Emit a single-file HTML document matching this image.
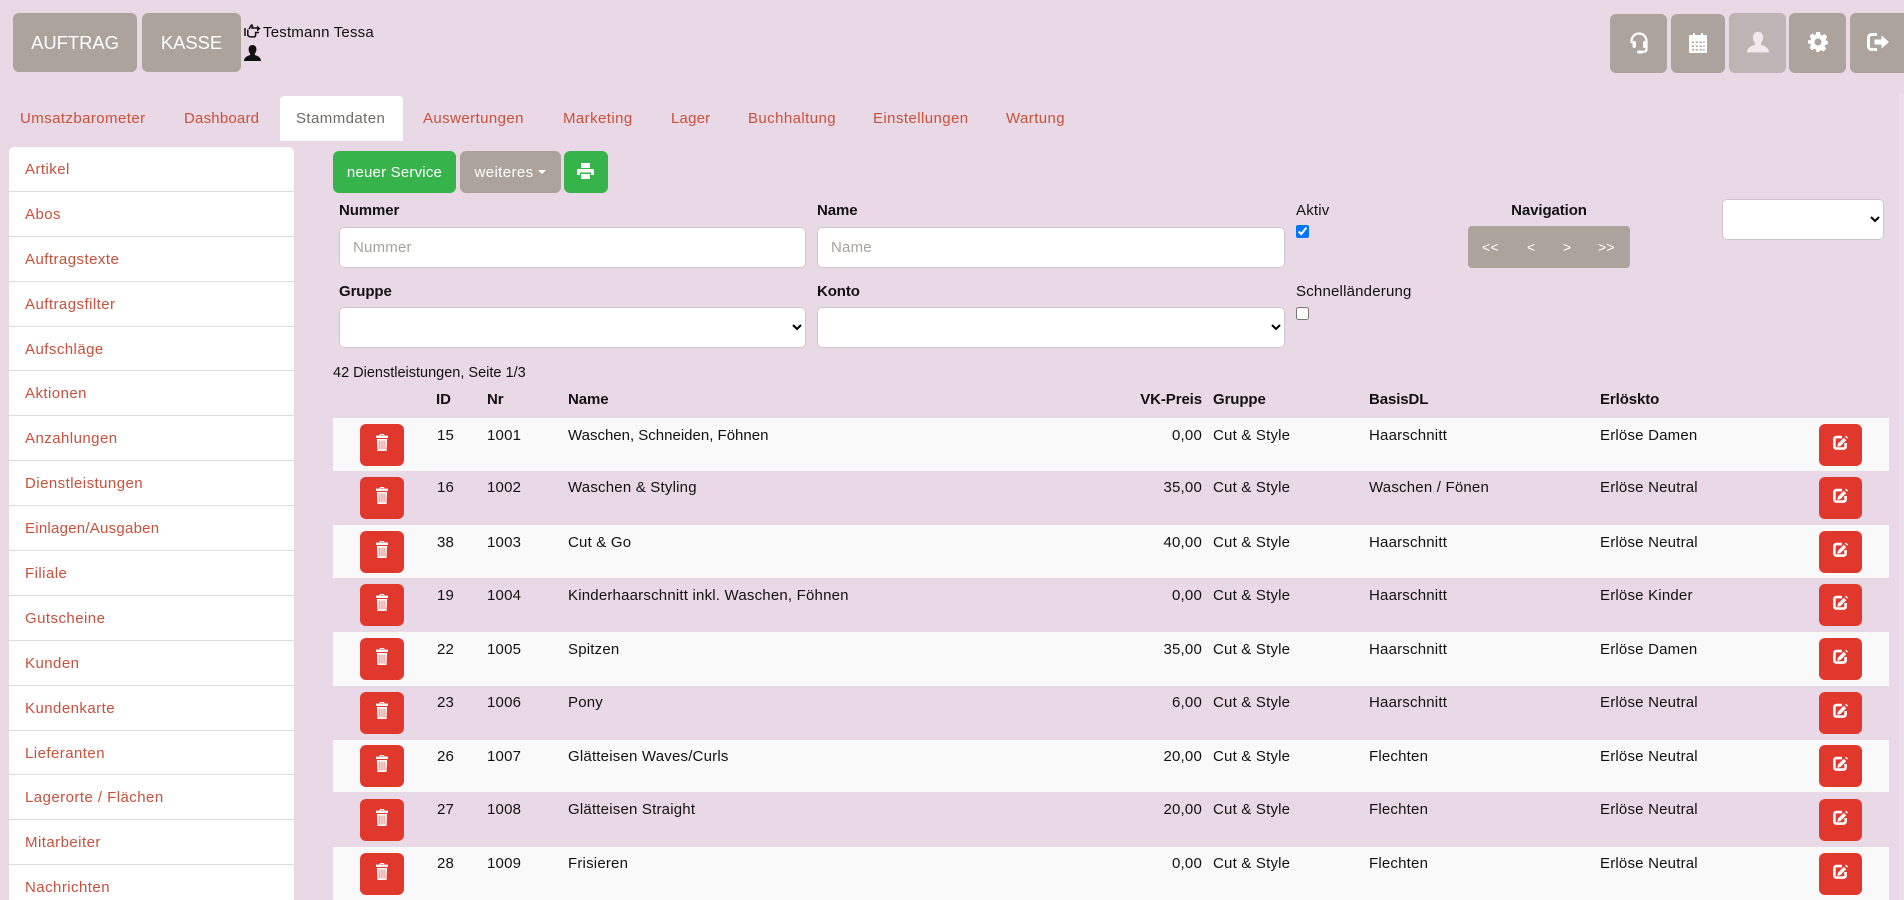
<!DOCTYPE html>
<html lang="de">
<head>
<meta charset="utf-8">
<title>Stammdaten</title>
<style>
*{box-sizing:border-box}
html,body{margin:0;padding:0;width:1904px;height:900px;overflow:hidden;background:#e9d9e6}
body{position:relative;font-family:"Liberation Sans",sans-serif;font-size:15px;color:#111;letter-spacing:.2px}
.a{position:absolute;white-space:nowrap}
.t{position:absolute;white-space:nowrap;line-height:20px;height:20px}
.b{font-weight:bold;letter-spacing:-.1px}
.btn{position:absolute;display:flex;align-items:center;justify-content:center;border-radius:6px;color:#fff;background:#aba39c;white-space:nowrap}
.g{background:#36b44b}
.tab{position:absolute;top:109px;line-height:20px;color:#c9503b;white-space:nowrap;letter-spacing:.42px}
#side{position:absolute;left:9px;top:147px;width:285px;height:760px;background:#fff;border-radius:5px 5px 0 0}
#side div{height:44.9px;line-height:46px;padding-left:16px;color:#c9503b;border-bottom:1px solid #ddd;letter-spacing:.45px}
.inp{position:absolute;background:#fff;border:1px solid #cfc6cd;border-radius:5px;height:41px;font:15px "Liberation Sans",sans-serif;padding:0}
.r{position:absolute;left:333px;width:1556px;height:54px}
.s{background:#f9f9f9}
.r .t{top:8px}
.r.n .t{top:7px}
.del,.edt{position:absolute;top:6px;height:41.5px;background:#e0382c;border-radius:6px;display:flex;align-items:center;justify-content:center}
.del{left:27px;width:44px}
.edt{left:1486px;width:43px}
.del svg,.edt svg{margin-top:-4px}
.c1{left:104px}.c2{left:154px}.c3{left:235px}.c4{right:687px}.c5{left:880px}.c6{left:1036px}.c7{left:1267px}
input[type=checkbox]{position:absolute;margin:0;width:13px;height:13px}
</style>
</head>
<body>
<svg width="0" height="0" style="position:absolute">
<defs>
<symbol id="tr" viewBox="0 0 12 17">
<path fill="#fff" d="M4 0h4l.6 1.6H12V4H0V1.6h3.4zM4.8 1 4.5 1.6h3L7.2 1zM.9 5h10.2l-.6 12h-9z"/>
<path stroke="#e0382c" stroke-opacity=".75" stroke-width=".8" d="M3.2 6.5v9M5.1 6.5v9M7 6.500v9M8.900 6.500v9"/>
</symbol>
<symbol id="ed" viewBox="0 0 16 15">
<path fill="none" stroke="#fff" stroke-width="2.6" d="M9 2.100H3.400a2 2 0 0 0-2 2v7.500a2 2 0 0 0 2 2h7.200a2 2 0 0 0 2-2V8"/>
<path fill="#fff" d="M10.800 2.800l2.400 2.400-5.700 5.800-3.300.9.800-3.300zM13 .600l2 2-1 1-2-2z"/>
</symbol>
</defs>
</svg>
<div class="a" style="left:1899px;top:93px;width:5px;height:807px;background:#ecdeea"></div>

<div class="btn" style="left:13px;top:13px;width:124px;height:59px;font-size:18.4px;letter-spacing:0">AUFTRAG</div>
<div class="btn" style="left:142px;top:13px;width:99px;height:59px;font-size:18.4px;letter-spacing:0">KASSE</div>

<svg class="a" style="left:244px;top:24px" width="17" height="14" viewBox="0 0 17 14"><path fill="none" stroke="#111" stroke-width="1.5" d="M1 4v8M3.800 5.500v5.800c1 1.200 2 1.600 3 1.600h3c1.200 0 1.800-.7 1.800-1.800V8.500h3.400M5 5l2.500-4c.7 0 1.200.6 1 1.400L8 4h6.500"/><path fill="#111" d="M13 1.500l3.500 3-3.500 3z"/></svg>
<div class="t" style="left:263px;top:23px;color:#111;font-size:15px">Testmann Tessa</div>
<svg class="a" style="left:244px;top:45px" width="17" height="16" viewBox="0 0 16 15"><path fill="#111" d="M8 0c2.400 0 3.700 1.700 3.700 4 0 1.700-.6 3.200-1.500 4.100v1.200c1.600.9 5.800 1.700 5.800 5.700H0c0-4 4.200-4.800 5.800-5.700V8.100C4.900 7.200 4.300 5.700 4.300 4 4.300 1.700 5.600 0 8 0z"/></svg>

<div class="btn" style="left:1610px;top:14px;width:57px;height:59px"><svg width="20" height="22" viewBox="0 0 20 22" style="margin-top:-2px"><path fill="none" stroke="#fff" stroke-width="2.200" d="M2.500 11V9a7.500 7.500 0 0 1 15 0v8c0 1.800-1 2.800-3 2.800H10"/><rect x="3.500" y="9" width="3.500" height="7" rx="1.700" fill="#fff"/><rect x="14" y="9" width="4.500" height="7" rx="1.700" fill="#fff"/><rect x="8" y="18.500" width="6" height="3" rx="1.500" fill="#fff"/></svg></div>
<div class="btn" style="left:1671px;top:14px;width:54px;height:59px"><svg width="18" height="20" viewBox="0 0 18 20" style="margin-top:-2px"><path fill="#fff" fill-rule="evenodd" d="M4 0h2v2h6V0h2v2h3a1 1 0 0 1 1 1v16a1 1 0 0 1-1 1H1a1 1 0 0 1-1-1V3a1 1 0 0 1 1-1h3zM2.800 8.500v1.500h2.200V8.500zm3.900 0v1.500h2.200V8.500zm3.900 0v1.500h2.200V8.500zm3.600 0v1.500h1.500V8.500zM2.800 12.500v1.500h2.200v-1.500zm3.900 0v1.500h2.200v-1.500zm3.900 0v1.500h2.200v-1.500zm3.600 0v1.500h1.500v-1.500zM2.800 16v1.500h2.200V16zm3.900 0v1.500h2.200V16zm3.900 0v1.500h2.200V16zm3.600 0v1.500h1.500V16z"/></svg></div>
<div class="btn" style="left:1729px;top:13px;width:57px;height:60px;background:#bfb4b4"><svg width="22" height="22" viewBox="0 0 16 15" style="margin-top:-2px"><path fill="#f4e8ee" d="M8 0c2.400 0 3.700 1.700 3.700 4 0 1.700-.6 3.200-1.500 4.100v1.200c1.600.9 5.800 1.700 5.800 5.700H0c0-4 4.200-4.800 5.800-5.700V8.100C4.900 7.200 4.300 5.700 4.300 4 4.300 1.700 5.600 0 8 0z"/></svg></div>
<div class="btn" style="left:1789px;top:13px;width:57px;height:60px"><svg width="20" height="20" viewBox="0 0 20 20" style="margin-top:-3px"><path fill="#fff" fill-rule="evenodd" d="M8 0h4l.5 2.800 1.600.7L16.500 2l2.800 2.800-1.600 2.400.7 1.600L20 9v3l-2.600.8-.7 1.600 1.500 2.400-2.800 2.800-2.400-1.500-1.400.6L11 20H8.500L8 17.500l-1.600-.7L4 18.300 1.500 15.600 3 13.200l-.7-1.500L0 11.500V8.500l2.400-.5.7-1.500L1.600 4 4.400 1.500l2.400 1.500 1-.4zM10 6.500a3.500 3.500 0 1 0 0 7 3.500 3.500 0 0 0 0-7z"/></svg></div>
<div class="btn" style="left:1850px;top:13px;width:60px;height:60px;justify-content:flex-start;padding-left:17px"><svg width="23" height="18" viewBox="0 0 23 18" style="margin-top:-2px"><path fill="none" stroke="#fff" stroke-width="3" d="M10 1.500H4.500a3 3 0 0 0-3 3v9a3 3 0 0 0 3 3H10"/><path fill="#fff" d="M7.500 6.500h7V2.500l7.500 6.500-7.500 6.500v-4h-7z"/></svg></div>

<div class="tab" style="left:20px">Umsatzbarometer</div>
<div class="tab" style="left:184px;letter-spacing:.2px">Dashboard</div>
<div class="a" style="left:280px;top:96px;width:123px;height:45px;background:#fff;border-radius:4px 4px 0 0"></div>
<div class="tab" style="left:296px;color:#6f6a68">Stammdaten</div>
<div class="tab" style="left:423px">Auswertungen</div>
<div class="tab" style="left:563px">Marketing</div>
<div class="tab" style="left:671px;letter-spacing:.2px">Lager</div>
<div class="tab" style="left:748px">Buchhaltung</div>
<div class="tab" style="left:873px">Einstellungen</div>
<div class="tab" style="left:1006px">Wartung</div>

<div id="side">
<div>Artikel</div>
<div>Abos</div>
<div>Auftragstexte</div>
<div>Auftragsfilter</div>
<div>Aufschläge</div>
<div>Aktionen</div>
<div>Anzahlungen</div>
<div>Dienstleistungen</div>
<div style="letter-spacing:.25px">Einlagen/Ausgaben</div>
<div>Filiale</div>
<div>Gutscheine</div>
<div>Kunden</div>
<div>Kundenkarte</div>
<div>Lieferanten</div>
<div>Lagerorte / Flächen</div>
<div>Mitarbeiter</div>
<div>Nachrichten</div>
</div>

<div class="btn g" style="left:333px;top:151px;width:123px;height:42px">neuer Service</div>
<div class="btn" style="left:460px;top:151px;width:101px;height:42px;letter-spacing:.4px;padding-right:1px">weiteres<span style="display:inline-block;margin-left:4px;border:4px solid transparent;border-top-color:#fff;border-bottom:0"></span></div>
<div class="btn g" style="left:564px;top:151px;width:44px;height:42px"><svg width="17" height="16" viewBox="0 0 17 16" style="margin:-2px 0 0 -2px"><path fill="#fff" fill-rule="evenodd" d="M4 0h9v5H4zM1.500 6h14A1.500 1.500 0 0 1 17 7.500V12h-3V9.500H3V12H0V7.500A1.500 1.500 0 0 1 1.500 6zM4 11h9v5H4z"/></svg></div>

<div class="t b" style="left:339px;top:201px">Nummer</div>
<div class="inp" style="left:339px;top:227px;width:467px"></div>
<div class="t" style="left:353px;top:238px;color:#a8a29e">Nummer</div>
<div class="t b" style="left:817px;top:201px">Name</div>
<div class="inp" style="left:817px;top:227px;width:468px"></div>
<div class="t" style="left:831px;top:238px;color:#a8a29e">Name</div>
<div class="t" style="left:1296px;top:201px">Aktiv</div>
<input type="checkbox" checked style="left:1296px;top:225px">
<div class="t b" style="left:1468px;top:201px;width:162px;text-align:center">Navigation</div>
<div class="a" style="left:1468px;top:226px;width:162px;height:42px;background:#aba39c;border-radius:4px"></div>
<div class="t" style="left:1482px;top:237px;color:#fff;font-size:14px">&lt;&lt;</div>
<div class="t" style="left:1527px;top:237px;color:#fff;font-size:14px">&lt;</div>
<div class="t" style="left:1563px;top:237px;color:#fff;font-size:14px">&gt;</div>
<div class="t" style="left:1598px;top:237px;color:#fff;font-size:14px">&gt;&gt;</div>
<select class="inp" style="left:1722px;top:199px;width:162px"><option></option></select>

<div class="t b" style="left:339px;top:282px">Gruppe</div>
<select class="inp" style="left:339px;top:307px;width:467px"><option></option></select>
<div class="t b" style="left:817px;top:282px">Konto</div>
<select class="inp" style="left:817px;top:307px;width:468px"><option></option></select>
<div class="t" style="left:1296px;top:282px">Schnelländerung</div>
<input type="checkbox" style="left:1296px;top:307px">

<div class="t" style="left:333px;top:363px;font-size:14.5px;letter-spacing:0">42 Dienstleistungen, Seite 1/3</div>

<div class="t b" style="left:436px;top:390px">ID</div>
<div class="t b" style="left:487px;top:390px">Nr</div>
<div class="t b" style="left:568px;top:390px">Name</div>
<div class="t b" style="right:702px;top:390px">VK-Preis</div>
<div class="t b" style="left:1213px;top:390px">Gruppe</div>
<div class="t b" style="left:1369px;top:390px">BasisDL</div>
<div class="t b" style="left:1600px;top:390px">Erlöskto</div>

<div class="r s" style="top:418px;height:53px"><div class="del"><svg width="12" height="17"><use href="#tr"/></svg></div><div class="t c1">15</div><div class="t c2">1001</div><div class="t c3" style="letter-spacing:0">Waschen, Schneiden, Föhnen</div><div class="t c4">0,00</div><div class="t c5">Cut &amp; Style</div><div class="t c6">Haarschnitt</div><div class="t c7">Erlöse Damen</div><div class="edt"><svg width="16" height="15"><use href="#ed"/></svg></div></div>
<div class="r n" style="top:471px"><div class="del"><svg width="12" height="17"><use href="#tr"/></svg></div><div class="t c1">16</div><div class="t c2">1002</div><div class="t c3">Waschen &amp; Styling</div><div class="t c4">35,00</div><div class="t c5">Cut &amp; Style</div><div class="t c6">Waschen / Fönen</div><div class="t c7">Erlöse Neutral</div><div class="edt"><svg width="16" height="15"><use href="#ed"/></svg></div></div>
<div class="r s" style="top:525px;height:53px"><div class="del"><svg width="12" height="17"><use href="#tr"/></svg></div><div class="t c1">38</div><div class="t c2">1003</div><div class="t c3">Cut &amp; Go</div><div class="t c4">40,00</div><div class="t c5">Cut &amp; Style</div><div class="t c6">Haarschnitt</div><div class="t c7">Erlöse Neutral</div><div class="edt"><svg width="16" height="15"><use href="#ed"/></svg></div></div>
<div class="r" style="top:578px"><div class="del"><svg width="12" height="17"><use href="#tr"/></svg></div><div class="t c1">19</div><div class="t c2">1004</div><div class="t c3">Kinderhaarschnitt inkl. Waschen, Föhnen</div><div class="t c4">0,00</div><div class="t c5">Cut &amp; Style</div><div class="t c6">Haarschnitt</div><div class="t c7">Erlöse Kinder</div><div class="edt"><svg width="16" height="15"><use href="#ed"/></svg></div></div>
<div class="r s" style="top:632px"><div class="del"><svg width="12" height="17"><use href="#tr"/></svg></div><div class="t c1">22</div><div class="t c2">1005</div><div class="t c3">Spitzen</div><div class="t c4">35,00</div><div class="t c5">Cut &amp; Style</div><div class="t c6">Haarschnitt</div><div class="t c7">Erlöse Damen</div><div class="edt"><svg width="16" height="15"><use href="#ed"/></svg></div></div>
<div class="r n" style="top:686px"><div class="del"><svg width="12" height="17"><use href="#tr"/></svg></div><div class="t c1">23</div><div class="t c2">1006</div><div class="t c3">Pony</div><div class="t c4">6,00</div><div class="t c5">Cut &amp; Style</div><div class="t c6">Haarschnitt</div><div class="t c7">Erlöse Neutral</div><div class="edt"><svg width="16" height="15"><use href="#ed"/></svg></div></div>
<div class="r s n" style="top:740px;height:52px"><div class="del" style="top:5px"><svg width="12" height="17"><use href="#tr"/></svg></div><div class="t c1">26</div><div class="t c2">1007</div><div class="t c3">Glätteisen Waves/Curls</div><div class="t c4">20,00</div><div class="t c5">Cut &amp; Style</div><div class="t c6">Flechten</div><div class="t c7">Erlöse Neutral</div><div class="edt" style="top:5px"><svg width="16" height="15"><use href="#ed"/></svg></div></div>
<div class="r" style="top:792px;height:55px"><div class="del" style="top:7px"><svg width="12" height="17"><use href="#tr"/></svg></div><div class="t c1">27</div><div class="t c2">1008</div><div class="t c3">Glätteisen Straight</div><div class="t c4">20,00</div><div class="t c5">Cut &amp; Style</div><div class="t c6">Flechten</div><div class="t c7">Erlöse Neutral</div><div class="edt" style="top:7px"><svg width="16" height="15"><use href="#ed"/></svg></div></div>
<div class="r s n" style="top:847px;height:53px"><div class="del"><svg width="12" height="17"><use href="#tr"/></svg></div><div class="t c1">28</div><div class="t c2">1009</div><div class="t c3">Frisieren</div><div class="t c4">0,00</div><div class="t c5">Cut &amp; Style</div><div class="t c6">Flechten</div><div class="t c7">Erlöse Neutral</div><div class="edt"><svg width="16" height="15"><use href="#ed"/></svg></div></div>

</body>
</html>
